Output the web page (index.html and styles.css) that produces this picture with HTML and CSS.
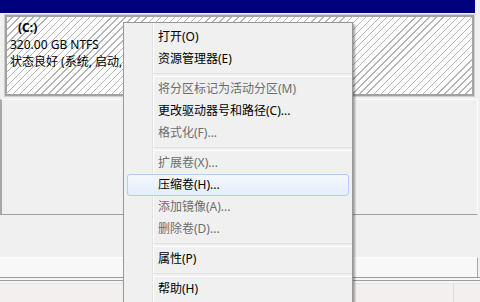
FILE: index.html
```html
<!DOCTYPE html>
<html lang="zh-CN">
<head>
<meta charset="utf-8">
<link rel="stylesheet" href="styles.css">
</head>
<body>
<div class="screen">
  <div class="topbar"></div>
  <div class="part">
    <div class="vol">
      <div class="vol-name">(C:)</div>
      <div class="vol-line">320.00 GB NTFS</div>
      <div class="vol-line">状态良好 (系统, 启动,</div>
    </div>
  </div>
  <div class="pane"></div>
  <div class="gap"></div>
  <div class="bar"></div>
  <div class="rules"></div>
  <div class="list"><div class="col"></div></div>

  <ul class="menu">
    <li class="item">打开(O)</li>
    <li class="item">资源管理器(E)</li>
    <li class="sep"></li>
    <li class="item off">将分区标记为活动分区(M)</li>
    <li class="item">更改驱动器号和路径(C)...</li>
    <li class="item off">格式化(F)...</li>
    <li class="sep"></li>
    <li class="item off">扩展卷(X)...</li>
    <li class="item hot">压缩卷(H)...</li>
    <li class="item off">添加镜像(A)...</li>
    <li class="item off">删除卷(D)...</li>
    <li class="sep"></li>
    <li class="item">属性(P)</li>
    <li class="sep"></li>
    <li class="item">帮助(H)</li>
  </ul>
</div>
</body>
</html>
```
FILE: styles.css
```css
* { box-sizing: border-box; }
html, body { margin: 0; padding: 0; }
body {
  width: 480px;
  height: 302px;
  overflow: hidden;
  background: #f0f0f0;
  font-family: "Noto Sans", "Noto Sans CJK SC", sans-serif;
  font-size: 12px;
  color: #000;
}
.screen {
  position: relative;
  width: 480px;
  height: 302px;
  overflow: hidden;
  background: #f0f0f0;
}
.topbar {
  height: 13px;
  margin-right: 5px;
  background: #00007e;
}
.part {
  margin: 2px 6px 0 5px;
  height: 81px;
  border: 2px solid #a2a2a2;
  box-shadow: 0 0 0 1px #cdcdcd;
  background-color: #fff;
  background-image: repeating-linear-gradient(-45deg, #fff 0 4px, #b4b4b4 4px 5px);
  overflow: hidden;
}
.vol {
  width: 116px;
  padding: 2px 0 0 3px;
  line-height: 17px;
  white-space: nowrap;
  overflow: hidden;
}
.vol-name {
  font-weight: bold;
  padding-left: 8px;
}
.pane {
  margin-top: 3px;
  height: 116px;
  border-top: 1px solid #fafafa;
  border-left: 2px solid #a8a8a8;
  border-bottom: 1px solid #a0a0a0;
  border-right: 1px solid #fbfbfb;
  margin-right: 2px;
  background: #f0f0f0;
}
.gap { height: 42px; }
.bar {
  height: 20px;
  margin-right: 2px;
  background: #f8f8f8;
  border-top: 1px solid #fdfdfd;
  border-right: 1px solid #a8a8a8;
}
.rules {
  height: 7px;
  border-top: 1px solid #9c9c9c;
  border-bottom: 1px solid #e4e4e4;
  background: linear-gradient(#f6f6f6 0 2px, #9c9c9c 2px 3px, #f6f6f6 3px);
}
.list {
  height: 20px;
  background: #f3efef;
  display: flex;
  justify-content: flex-end;
  padding-right: 26px;
}
.col {
  width: 1px;
  background: #dcdcdc;
}
.menu {
  position: absolute;
  left: 123px;
  top: 22px;
  width: 230px;
  margin: 0;
  padding: 3px 0 2px;
  list-style: none;
  border: 1px solid #979797;
  background: linear-gradient(to right, #f0f0f0 28px, #e2e3e3 28px 29px, #ffffff 29px 30px, #f0f0f0 30px);
  box-shadow: 2px 2px 2px rgba(0, 0, 0, 0.35);
  height: 300px;
}
.item {
  height: 22px;
  line-height: 20px;
  margin: 0 3px;
  padding-left: 30px;
  border: 1px solid transparent;
  border-radius: 3px;
  white-space: nowrap;
}
.item.off { color: #6d6d6d; }
.item.hot {
  border-color: #aecff7;
  background: linear-gradient(#f2f8fe, #e3eefb);
}
.sep {
  height: 8px;
  margin-left: 29px;
  padding-top: 3px;
}
.sep::before {
  content: "";
  display: block;
  height: 2px;
  border-top: 1px solid #e0e0e0;
  border-bottom: 1px solid #ffffff;
}
```
